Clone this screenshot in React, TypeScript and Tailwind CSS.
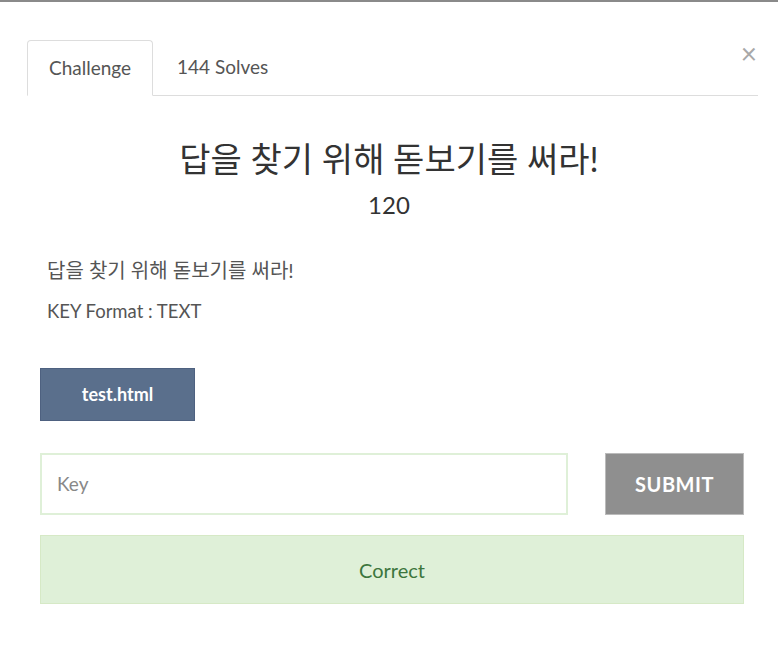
import React from "react";

const font = { fontFamily: 'Lato, "Noto Sans CJK KR", sans-serif' };

export default function App() {
  return (
    <div className="w-[778px] h-[663px] bg-white relative overflow-hidden" style={font}>
      <div className="h-[2px] bg-[#8a8a8a]" />
      <div className="pt-[38px] pl-[27px] pr-[20px] relative">
        <button className="absolute right-[21px] top-[37px] text-[28px] leading-none text-[#a8a8a8]">×</button>
        <div className="flex items-end border-b border-[#dddddd] h-[56px]">
          <div className="h-[56px] w-[126px] border border-[#dddddd] border-b-white rounded-t-[4px] -mb-px flex items-center justify-center text-[19px] text-[#555]">
            Challenge
          </div>
          <div className="h-[56px] flex items-center pl-[24px] text-[19px] text-[#555]">144 Solves</div>
        </div>
      </div>
      <div className="text-center mt-[43px] text-[34px] leading-[40px] text-[#333]">답을 찾기 위해 돋보기를 써라!</div>
      <div className="text-center mt-[11px] text-[24px] leading-[30px] text-[#333]">120</div>
      <div className="pl-[47px] mt-[37px] text-[#555]">
        <p className="text-[20px] leading-[26px]">답을 찾기 위해 돋보기를 써라!</p>
        <p className="mt-[16px] text-[18.5px] leading-[24px]">KEY Format : TEXT</p>
      </div>
      <div className="pl-[40px] pr-[34px] mt-[45px]">
        <button className="w-[155px] h-[53px] bg-[#5a6f8c] border border-[#4e6180] text-white font-bold text-[18px]">
          test.html
        </button>
        <div className="flex mt-[32px] gap-[37px]">
          <div className="w-[528px] shrink-0 h-[62px] border-2 border-[#dff0d8] flex items-center px-[15px] text-[19px] text-[#888]">
            Key
          </div>
          <button className="w-[139px] shrink-0 h-[62px] bg-[#8f8f8f] border border-[#bbb] text-white font-bold text-[20px] tracking-[0.5px]">
            SUBMIT
          </button>
        </div>
        <div className="mt-[20px] h-[69px] bg-[#dff0d8] border border-[#d6e9c6] flex items-center justify-center text-[20px] text-[#3c763d]">
          Correct
        </div>
      </div>
    </div>
  );
}
